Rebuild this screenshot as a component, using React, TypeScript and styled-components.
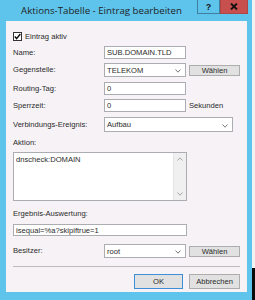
import React from 'react';
import styled, { createGlobalStyle } from 'styled-components';

const UI_FONT = '"Liberation Sans", Arial, sans-serif';
const TITLE_FONT = '"Open Sans", "Noto Sans", sans-serif';

const FRAME = '#5fc4ec';
const FACE = '#f6f2f6';
const EDGE = '#abadb3';
const TEXT = '#2b2b2b';

const GlobalStyle = createGlobalStyle`
  html, body {
    margin: 0;
    padding: 0;
  }
  body {
    width: 255px;
    height: 300px;
    overflow: hidden;
    background: linear-gradient(to bottom, #f2f2f2 0, #f2f2f2 268px, #0b0b0b 268px);
    font-family: ${UI_FONT};
  }
`;

const Screen = styled.div`
  display: flex;
  width: 255px;
  height: 300px;
`;

const Window = styled.div`
  width: 252px;
  height: 300px;
  box-sizing: border-box;
  background: ${FRAME};
  display: flex;
  flex-direction: column;
  padding: 0 5px 8px 6px;
`;

const TitleBar = styled.div`
  display: flex;
  align-items: flex-start;
  height: 21px;
  margin-right: -1px;
`;

const Title = styled.div`
  flex: 1;
  text-align: center;
  font-family: ${TITLE_FONT};
  font-size: 9.7px;
  line-height: 21px;
  color: #1e1e1e;
  white-space: nowrap;
`;

const CaptionButton = styled.div<{ $w: number; $close?: boolean }>`
  width: ${(p) => p.$w}px;
  height: 14px;
  box-sizing: border-box;
  display: flex;
  align-items: center;
  justify-content: center;
  background: ${(p) => (p.$close ? '#c7504f' : FRAME)};
  border: 1px solid ${(p) => (p.$close ? '#b04545' : '#3f7f9e')};
  border-top: none;
  font-family: ${UI_FONT};
  font-weight: 700;
  font-size: 9px;
  color: #111;
`;

const Client = styled.div`
  flex: 1;
  background: ${FACE};
  display: flex;
  flex-direction: column;
  padding: 10px 7px 0 7px;
  font-size: 7.6px;
  color: ${TEXT};
`;

const CheckRow = styled.div`
  display: flex;
  align-items: center;
  gap: 3px;
  height: 10px;
`;

const CheckBox = styled.div`
  width: 9px;
  height: 9px;
  box-sizing: border-box;
  border: 1px solid #333;
  background: #fff;
  display: flex;
  align-items: center;
  justify-content: center;
`;

const FieldRow = styled.div<{ $top: number; $h: number }>`
  display: grid;
  grid-template-columns: 91px 82px 54px;
  align-items: center;
  margin-top: ${(p) => p.$top}px;
  height: ${(p) => p.$h}px;
`;

const Label = styled.div<{ $top?: number }>`
  line-height: 10px;
  margin-top: ${(p) => p.$top ?? 0}px;
  white-space: nowrap;
`;

const Field = styled.div<{ $w?: number; $h: number; $top?: number }>`
  position: relative;
  width: ${(p) => (p.$w ? `${p.$w}px` : '100%')};
  height: ${(p) => p.$h}px;
  margin-top: ${(p) => p.$top ?? 0}px;
  box-sizing: border-box;
  border: 1px solid ${EDGE};
  background: #fff;
  display: flex;
  align-items: center;
  padding: 0 2px;
  white-space: nowrap;
`;

const Chevron = styled.svg`
  position: absolute;
  right: 4px;
  top: 50%;
  margin-top: -1px;
`;

const Unit = styled.div`
  padding-left: 3px;
  white-space: nowrap;
`;

const PushButton = styled.div<{ $w: number; $h: number; $default?: boolean }>`
  width: ${(p) => p.$w}px;
  height: ${(p) => p.$h}px;
  box-sizing: border-box;
  justify-self: end;
  background: #e1e1e1;
  border: 1px solid ${(p) => (p.$default ? '#3c8fd8' : '#adadad')};
  display: flex;
  align-items: center;
  justify-content: center;
  white-space: nowrap;
`;

const MultiLine = styled.div`
  margin-top: 4px;
  width: 174px;
  height: 49px;
  box-sizing: border-box;
  border: 1px solid ${EDGE};
  background: #fff;
  display: flex;
`;

const MultiText = styled.div`
  flex: 1;
  padding: 2px 2px;
  line-height: 9px;
`;

const ScrollBar = styled.div`
  width: 12px;
  background: #f0f0f0;
  border-left: 1px solid #e4e4e4;
  display: flex;
  flex-direction: column;
  justify-content: space-between;
  align-items: center;
  padding: 4px 0;
`;

const Separator = styled.div`
  margin-top: 8px;
  height: 0;
  border-top: 1px solid #bcbcbc;
  width: 227px;
`;

const Footer = styled.div`
  margin-top: 7px;
  display: flex;
  justify-content: flex-end;
  gap: 6px;
  width: 227px;
`;

const Down = () => (
  <Chevron width="6" height="4" viewBox="0 0 6 4">
    <polyline points="0.5,0.5 3,3.2 5.5,0.5" fill="none" stroke="#7a7a7a" strokeWidth="1" />
  </Chevron>
);

const Arrow = ({ up }: { up?: boolean }) => (
  <svg width="6" height="4" viewBox="0 0 6 4">
    <polyline
      points={up ? '0.5,3.5 3,0.8 5.5,3.5' : '0.5,0.5 3,3.2 5.5,0.5'}
      fill="none"
      stroke="#a5a5a5"
      strokeWidth="1"
    />
  </svg>
);

export default function App() {
  return (
    <Screen>
      <GlobalStyle />
      <Window>
        <TitleBar>
          <Title>Aktions-Tabelle - Eintrag bearbeiten</Title>
          <CaptionButton $w={23}>?</CaptionButton>
          <CaptionButton $w={28} $close>
            <svg width="8" height="7" viewBox="0 0 8 7">
              <path d="M1 0.5 L7 6.5 M7 0.5 L1 6.5" stroke="#111" strokeWidth="1.8" />
            </svg>
          </CaptionButton>
        </TitleBar>
        <Client>
          <CheckRow>
            <CheckBox>
              <svg width="7" height="7" viewBox="0 0 7 7">
                <polyline points="0.8,3.6 2.6,5.6 6.3,1" fill="none" stroke="#111" strokeWidth="1.5" />
              </svg>
            </CheckBox>
            Eintrag aktiv
          </CheckRow>

          <FieldRow $top={5} $h={13}>
            <Label>Name:</Label>
            <Field $h={13}>SUB.DOMAIN.TLD</Field>
          </FieldRow>

          <FieldRow $top={4} $h={14}>
            <Label>Gegenstelle:</Label>
            <Field $h={14}>
              TELEKOM
              <Down />
            </Field>
            <PushButton $w={51} $h={11}>Wählen</PushButton>
          </FieldRow>

          <FieldRow $top={5} $h={13}>
            <Label>Routing-Tag:</Label>
            <Field $h={13}>0</Field>
          </FieldRow>

          <FieldRow $top={4} $h={13}>
            <Label>Sperrzeit:</Label>
            <Field $h={13}>0</Field>
            <Unit>Sekunden</Unit>
          </FieldRow>

          <FieldRow $top={5} $h={15}>
            <Label>Verbindungs-Ereignis:</Label>
            <Field $w={129} $h={15}>
              Aufbau
              <Down />
            </Field>
          </FieldRow>

          <Label $top={6}>Aktion:</Label>
          <MultiLine>
            <MultiText>dnscheck:DOMAIN</MultiText>
            <ScrollBar>
              <Arrow up />
              <Arrow />
            </ScrollBar>
          </MultiLine>

          <Label $top={8}>Ergebnis-Auswertung:</Label>
          <Field $w={174} $h={12} $top={5}>isequal=%a?skipiftrue=1</Field>

          <FieldRow $top={8} $h={14}>
            <Label>Besitzer:</Label>
            <Field $h={14}>
              root
              <Down />
            </Field>
            <PushButton $w={51} $h={11}>Wählen</PushButton>
          </FieldRow>

          <Separator />
          <Footer>
            <PushButton $w={49} $h={15} $default>OK</PushButton>
            <PushButton $w={51} $h={15}>Abbrechen</PushButton>
          </Footer>
        </Client>
      </Window>
    </Screen>
  );
}
